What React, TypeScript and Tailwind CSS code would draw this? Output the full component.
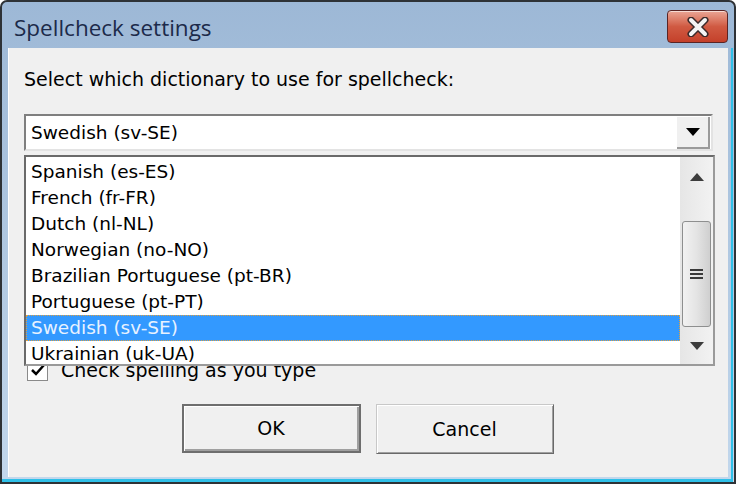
import React from "react";

const items = [
  "Spanish (es-ES)",
  "French (fr-FR)",
  "Dutch (nl-NL)",
  "Norwegian (no-NO)",
  "Brazilian Portuguese (pt-BR)",
  "Portuguese (pt-PT)",
  "Swedish (sv-SE)",
  "Ukrainian (uk-UA)",
];

function CloseButton() {
  return (
    <div className="w-[61px] h-[33px] rounded-[4px] border border-[#5a2424] bg-gradient-to-b from-[#eaa595] via-[#d05a42] to-[#c4402a] flex items-center justify-center shadow-[inset_0_1px_0_rgba(255,255,255,0.6)]">
      <svg width="30" height="20" viewBox="0 0 30 20">
        <path d="M8 3 L22 17 M22 3 L8 17" stroke="#3b2a2a" strokeWidth="7" strokeLinecap="round" />
        <path d="M8 3 L22 17 M22 3 L8 17" stroke="#f4f4f4" strokeWidth="4" strokeLinecap="round" />
      </svg>
    </div>
  );
}

export default function App() {
  return (
    <div className="w-[738px] h-[485px] bg-white relative overflow-hidden" style={{ fontFamily: '"DejaVu Sans", Verdana, sans-serif' }}>
      <div className="w-[736px] h-[484px] rounded-t-[7px] border-[2px] border-[#2e3236] bg-gradient-to-b from-[#9db8d6] to-[#c2d7ec] flex flex-col">
        <div className="h-[46px] flex items-center justify-between pl-[12px] pr-[6px] shrink-0">
          <span className="text-[22.5px] text-[#1c2a4a] mt-[5px]" style={{ fontFamily: '"Open Sans", "Noto Sans", sans-serif' }}>
            Spellcheck settings
          </span>
          <div className="mt-[3px]">
            <CloseButton />
          </div>
        </div>
        <div className="flex-1 ml-[6px] mr-[6px] mb-[5px] bg-[#f0f0f0] border-l border-white relative">
          <div className="pl-[15px] pt-[20px] text-[19px] leading-[22px] text-black">Select which dictionary to use for spellcheck:</div>
          {/* combobox */}
          <div className="ml-[15px] mt-[24px] w-[689px] h-[37px] border-[2px] border-[#7f7f7f] border-r-[#e3e3e3] border-b-[#e3e3e3] bg-white flex items-center">
            <span className="pl-[5px] flex-1 text-[18.5px] text-black">Swedish (sv-SE)</span>
            <div className="w-[33px] h-[32px] mr-[1px] bg-[#f0f0f0] border-r-[2px] border-b-[2px] border-[#9a9a9a] flex items-center justify-center">
              <svg width="14" height="8" viewBox="0 0 14 8">
                <path d="M0 0 L14 0 L7 8 Z" fill="#000" />
              </svg>
            </div>
          </div>
          {/* checkbox row under list */}
          <div className="ml-[18px] mt-[208px] flex items-center gap-[13px]">
            <div className="w-[21px] h-[21px] bg-white border border-[#8a8a8a] flex items-center justify-center">
              <svg width="14" height="12" viewBox="0 0 14 12">
                <path d="M1 6 L5 10 L13 1" stroke="#000" strokeWidth="2.5" fill="none" />
              </svg>
            </div>
            <span className="text-[19px] leading-[22px] text-black">Check spelling as you type</span>
          </div>
          {/* buttons */}
          <div className="flex justify-center gap-[15px] mt-[23px] ml-[-2px]">
            <div className="w-[179px] h-[49px] border-[2px] border-[#6e6e6e] bg-[#f0f0f0] flex items-center justify-center shadow-[inset_1px_1px_0_#fff,inset_-2px_-2px_0_#a0a0a0] text-[19px] text-black">
              OK
            </div>
            <div className="w-[178px] h-[50px] border border-[#c8c8c8] border-r-[#696969] border-b-[#696969] bg-[#f0f0f0] flex items-center justify-center shadow-[inset_1px_1px_0_#fff,inset_-1px_-1px_0_#a0a0a0] text-[19px] text-black">
              Cancel
            </div>
          </div>
          {/* dropdown list overlay */}
          <div className="absolute left-[15px] top-[107px] w-[691px] h-[211px] bg-white border-[2px] border-[#6a6a6a] border-r-[#9a9a9a] border-b-[#9a9a9a] flex overflow-hidden">
            <div className="flex-1 pt-[2px]">
              {items.map((it) => (
                <div
                  key={it}
                  className={
                    it === "Swedish (sv-SE)"
                      ? "h-[26px] shrink-0 flex items-center pl-[4px] text-[18.5px] bg-[#3399ff] text-[#e8f2ff] border border-dotted border-[#e0a040]"
                      : "h-[26px] shrink-0 flex items-center pl-[5px] text-[18.5px] text-black"
                  }
                >
                  {it}
                </div>
              ))}
            </div>
            <div className="w-[33px] bg-gradient-to-r from-[#e6e6e6] to-[#f2f2f2] flex flex-col items-center">
              <div className="h-[40px] flex items-center justify-center">
                <svg width="14" height="8" viewBox="0 0 14 8">
                  <path d="M7 0 L14 8 L0 8 Z" fill="#3c3c3c" />
                </svg>
              </div>
              <div className="mt-[24px] w-[29px] h-[106px] rounded-[3px] border border-[#8e8f8f] bg-gradient-to-r from-[#f2f2f2] via-[#e4e4e4] to-[#cfcfcf] flex flex-col items-center justify-center gap-[2px]">
                <div className="w-[13px] h-[2px] bg-[#3a3a3a]" />
                <div className="w-[13px] h-[2px] bg-[#3a3a3a]" />
                <div className="w-[13px] h-[2px] bg-[#3a3a3a]" />
              </div>
              <div className="flex-1 flex items-center justify-center">
                <svg width="14" height="8" viewBox="0 0 14 8">
                  <path d="M0 0 L14 0 L7 8 Z" fill="#3c3c3c" />
                </svg>
              </div>
            </div>
          </div>
        </div>
      </div>
      <div className="absolute left-[731px] top-[48px] w-[2px] h-[433px] bg-[#2fc0e8]" />
      <div className="absolute left-[2px] top-[479px] w-[731px] h-[3px] bg-[#2fc0e8]" />
    </div>
  );
}
